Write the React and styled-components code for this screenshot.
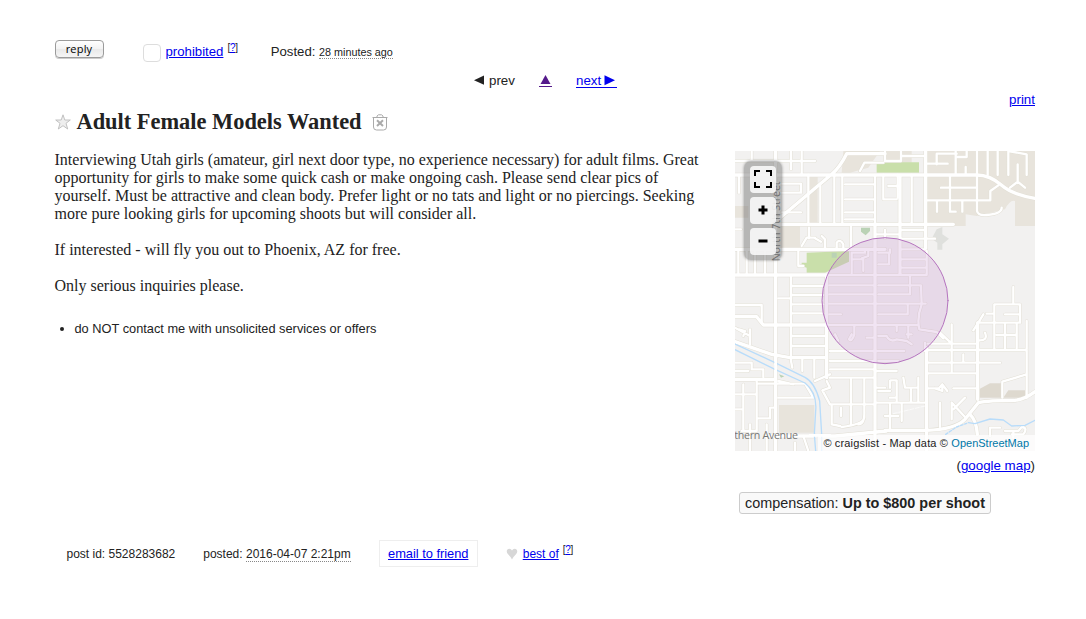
import React from 'react';
import styled, { createGlobalStyle } from 'styled-components';

const GlobalStyle = createGlobalStyle`
  * { box-sizing: border-box; }
  body { margin: 0; background: #fff; color: #222; font-family: "Liberation Sans", Arial, sans-serif; }
  a { color: #0000ee; text-decoration: underline; }
`;

const Page = styled.main`
  width: 1086px;
  height: 619px;
  padding: 39px 51px 0 54.5px;
  overflow: hidden;
`;
const Toolbar = styled.header`
  display: flex;
  align-items: center;
  height: 24px;
  font-size: 13.2px;
  white-space: nowrap;
`;
const ReplyButton = styled.button`
  width: 49px;
  height: 18px;
  margin: -5px 39px 0 0;
  padding: 0;
  border: 1px solid #9b9b9b;
  border-radius: 4px;
  background: linear-gradient(#fff, #f3f3f3 50%, #e9e9e9 51%, #f5f5f5);
  box-shadow: 0 1px 0 #ccc;
  color: #000;
  font: 11px/16px "Open Sans", sans-serif;
  letter-spacing: .2px;
`;
const FlagBox = styled.span`
  width: 18px;
  height: 18px;
  margin: 4px 5px 0 0;
  border: 1px solid #ddd;
  border-radius: 4px;
`;
const Help = styled.sup`
  align-self: flex-start;
  margin: ${p => p.$top}px 0 0 4px;
  font-size: 10px;
  line-height: 12px;
  letter-spacing: -0.3px;
`;
const PostedAgo = styled.span`
  margin-left: 33px;
`;
const Time = styled.time`
  font-size: ${p => p.$size}px;
  border-bottom: 1px dotted #888;
`;
const PrevNext = styled.nav`
  display: flex;
  align-items: center;
  height: 18px;
  margin: 8px 0 0 419.5px;
  font-size: 13.33px;
`;
const Arrow = styled.svg`
  width: 11px;
  height: 11px;
  fill: currentColor;
`;
const PrevItem = styled.span`
  display: flex;
  align-items: center;
  gap: 4px;
  width: 65px;
`;
const UpLink = styled.a`
  display: flex;
  width: 13px;
  height: 13px;
  margin: 1px 24px 0 0;
  padding: 0 1px;
  border-bottom: 1px solid #551a8b;
  && { color: #551a8b; text-decoration: none; }
`;
const NextLink = styled.a`
  display: flex;
  align-items: center;
  gap: 3px;
  width: 41px;
  height: 15px;
  margin-top: 1px;
  border-bottom: 1px solid #0000ee;
  && { text-decoration: none; }
`;
const PrintRow = styled.div`
  display: flex;
  justify-content: flex-end;
  height: 18px;
  font-size: 13.33px;
  line-height: 22px;
`;
const Title = styled.h2`
  display: flex;
  align-items: center;
  height: 26px;
  margin: 2px 0 16px;
  font: bold 22.4px/26px "Liberation Serif", "Times New Roman", serif;
  white-space: nowrap;
`;
const TitleText = styled.span`
  margin: 0 10px 0 6px;
`;
const Content = styled.section`
  display: flex;
  justify-content: space-between;
  height: 389px;
`;
const Body = styled.article`
  width: 655px;
  font: 16px/18px "Liberation Serif", "Times New Roman", serif;
`;
const Paragraph = styled.p`
  margin: 0 0 18px;
  white-space: nowrap;
`;
const Notices = styled.ul`
  margin: 25px 0 0;
  padding-left: 20px;
  font: 12.8px/18px "Liberation Sans", Arial, sans-serif;
`;
const Side = styled.aside`
  width: 300px;
`;
const MapBox = styled.div`
  position: relative;
  width: 300px;
  height: 300px;
  overflow: hidden;
  background: #f2f1f0;
`;
const MapArt = styled.svg`
  display: block;
  width: 300px;
  height: 300px;
`;
const MapControls = styled.div`
  position: absolute;
  left: 9px;
  top: 10px;
  width: 38px;
  height: 99px;
  padding: 5px 6px;
  display: flex;
  flex-direction: column;
  gap: 4px;
  border-radius: 7px;
  background: rgba(100, 100, 100, .42);
  box-shadow: 0 0 3px rgba(0,0,0,.4);
`;
const MapButton = styled.button`
  display: grid;
  place-items: center;
  width: 26px;
  height: 27px;
  padding: 0 0 1px;
  border: 0;
  border-radius: 4px;
  background: rgba(248,248,248,.9);
`;
const Attribution = styled.div`
  position: absolute;
  right: 0;
  bottom: 0;
  height: 16px;
  padding: 0 6px 0 5px;
  background: rgba(255,255,255,.72);
  font-size: 11px;
  line-height: 16px;
  letter-spacing: .16px;
  white-space: nowrap;
  a { color: #0078a8; text-decoration: none; letter-spacing: 0; }
`;
const MapLink = styled.p`
  margin: 5px 0 17px;
  font-size: 13.33px;
  line-height: 19px;
  text-align: right;
`;
const Attribute = styled.span`
  display: inline-flex;
  align-items: center;
  height: 22px;
  margin-left: 4px;
  padding: 0 5px;
  border: 1px solid #ccc;
  border-radius: 3px;
  background: #f9f9f9;
  font-size: 14.4px;
  white-space: pre;
`;
const PostInfo = styled.footer`
  display: flex;
  align-items: center;
  height: 27px;
  padding-left: 12px;
  font-size: 12px;
  white-space: nowrap;
`;
const PostedOn = styled.span`
  margin: 0 28px;
`;
const EmailBox = styled.span`
  width: 99px;
  height: 27px;
  margin-right: 28px;
  border: 1px solid #eee;
  font-size: 13px;
  letter-spacing: -.04px;
  line-height: 26px;
  text-align: center;
  a { font-size: 12.9px; }
`;
const BestOf = styled.a`
  margin-left: 5px;
`;

const streets = {
  main: `M0 295H450 M122 0V900 M420 220V900 M130 205L290 70Q315 48 335 8H450 M130 220H655 M275 375V680
    M0 72H725Q765 72 800 103Q830 130 900 142 M572 0V292 M495 72V370 M575 590V900 M0 685H120
    M90 855H300L455 840 M450 838H575Q660 835 690 805L730 755Q760 748 840 748Q870 745 900 722 M705 790Q725 810 727 850 M0 572L110 610L165 620H270
    M728 515V745 M0 372H275 M0 497H65L85 522H270`,
  side: `M0 30H240 M12 72V125 M50 0V30 M110 98H198V125H110 M140 184H198 M200 0V72 M168 0V55 M220 72V220 M256 105V220 M298 72V220 M322 72V220
    M330 100H415 M330 145H415 M330 184H415 M330 205H420 M420 72V220 M375 60L388 35H445 M445 72V145H485 M460 105H495 M488 72V140
    M190 295V345H205 M200 285L215 260H240 M222 230V262 M260 255L270 265V290 M240 262L258 272 M305 292V275Q315 262 325 280V292 M348 220V290
    M10 295V372 M35 295V372 M60 295V372 M90 295V372 M168 375V625 M130 442H165 M172 405H265 M172 432H265 M172 460H265 M172 487H265
    M172 555H270 M172 585H270 M0 462H80V515 M12 535L30 540L25 555 M45 535V580 M0 530L45 555 M172 650L168 630 M202 620V660 M238 620V680 M240 690L285 670
    M285 600H420 M285 630H420 M285 655H420 M285 680H420V710H450 M275 690L285 710L262 718L285 760H420 M290 765V820L315 825 M318 770V795
    M348 685V820 M388 685V800Q385 820 320 828 M370 820Q390 820 388 780 M0 635H50V655H85V678 M0 660H40 M65 690V840H20
    M25 700V790 M0 730H65 M25 760V840 M70 802H105V770H122 M70 698H210L235 740H130 M130 690L175 700 M45 820V900 M95 820V900 M180 875V900 M205 855L220 900
    M0 235H18 M450 0V30H498V0 M498 15H570 M605 40V8H665 M578 38H638 M662 0V70 M662 18H695V0 M726 0V180Q730 195 755 192Q800 188 800 170
    M758 72V0 M788 72V0 M820 72V0L875 10V72 M848 40V92L825 110 M848 92L870 110 M692 70V48 M645 75V182H662 M618 110H725 M575 148H766V120L790 103
    M606 148V182 M682 148V182 M530 72V220 M495 237H570 M495 263H600 M450 237V262 M420 250H490 M835 408V460
    M755 488H778V460H855V515H730L715 538 M730 515L745 490 M778 460V595 M810 515V590 M845 515V590 M785 552H845 M810 490H850 M875 510V595 M750 545Q760 570 730 568
    M578 578H720 M575 597H875V740 M575 635H795 M575 667H725 M575 712H612L622 700L637 720 M622 705V720L600 712 M655 712H725 M650 520V663
    M615 545L650 578 M685 610V633 M802 740V692L875 670 M420 660H485 M430 720H465 M465 740H485 M468 688H485V750 M465 690V710
    M505 680L510 710H550V680 M528 710V755 M550 710V755 M425 755H570 M465 755V835 M500 755V810 M450 795H490
    M615 755V828 M650 755V805 M650 755L690 798 M690 740L655 775 M765 855V830H795 M810 840H850L860 828Q880 830 865 850H830 M835 840V860 M0 775H25`,
  zone: `M283 403H415 M283 430H415 M283 458H530 M283 490H318 M275 522H548 M350 350V305H390V295 M350 325H385V360 M350 305V365 M275 372H575V300 M400 300V315L380 322
    M495 295H570 M495 325H570 M495 350H570 M430 305H462V340H430 M465 295V305 M430 403H558L560 460Q545 500 553 535L605 543L625 562 M525 375V430H430
    M430 458H572 M430 490H518V460 M430 555L455 555Q465 575 485 565L515 570L530 580 M520 525V560 M485 525V540 M515 550H530
    M358 525V550Q350 575 342 565L350 550 M395 560H420 M285 600H508 M300 550L310 570 M570 575V600 M430 630H490 M420 260V640`
};

function CityMap() {
  return (
    <MapArt viewBox="0 0 900 900" fill="none" strokeLinecap="round" strokeLinejoin="round">
      <path fill="#e8e4dc" d="M325 0H435L400 50L345 65H320Z M220 75H248V215H220Z M130 225H195V290H130Z M0 165H40V200H0Z M450 0H530V35H450Z M575 0H900V225H840V150Q825 145 810 175L725 195L692 190V225H575Z M132 762H238V845H132Z" />
      <path fill="#ded9cf" d="M732 715L765 697H800V740H732Z M820 718H873V740H805Z" />
      <path fill="#c9dfaa" d="M425 34H552V65H425Z M215 305L342 300V332L270 365H215V350L200 345V335L215 335Z" />
      <path fill="#bad2b5" d="M378 230H405V240L392 253L378 242Z M290 305H305V320H290Z M132 670L148 676L138 680Z" />
      <path fill="#dfe0dd" d="M605 235L622 228V250L642 263L622 280V296H607V275L590 263Z" />
      {['#e2dfd5', '#fff'].map((color, i) => (
        <g key={color} stroke={color}>
          <path d={streets.side} strokeWidth={i ? 7 : 10} />
          <path d={streets.zone} strokeWidth={i ? 7 : 10} />
          <path d={streets.main} strokeWidth={i ? 10 : 13} />
        </g>
      ))}
      <path stroke="#f2f1f0" strokeWidth="10" d="M0 588L120 647L210 687Q245 715 247 765L250 900" />
      <path stroke="#b8dcfa" strokeWidth="4" d="M0 579L120 635L210 679Q240 695 254 750L260 850V900 M0 596L120 655L210 696Q247 725 242 780L238 850L242 900" />
      <path stroke="#fff" strokeWidth="8" d="M122 610V665 M225 853H285" />
      <path stroke="#b8dcfa" strokeWidth="4" d="M700 815L720 818L765 804L805 807L830 825L870 823L900 808" />
      <path stroke="#b8dcfa" strokeWidth="4" strokeDasharray="8 5" d="M632 850L665 828L695 817" />
      <path stroke="#fff" strokeWidth="2" strokeDasharray="12 5" d="M475 788L570 765" />
      <circle cx="450" cy="449" r="189" fill="#c895d0" fillOpacity=".25" stroke="#b574bf" strokeWidth="3" />
      <text transform="translate(135 331) rotate(-90)" fill="#777" fontFamily="Open Sans, sans-serif" fontSize="32" textLength="240">North 7th Street</text>
      <text x="-2" y="863" fill="#777" fontFamily="Open Sans, sans-serif" fontSize="32" textLength="191">thern Avenue</text>
    </MapArt>
  );
}

export default function App() {
  return (
    <>
      <GlobalStyle />
      <Page>
        <Toolbar>
          <ReplyButton>reply</ReplyButton>
          <FlagBox />
          <a href="#prohibited">prohibited</a>
          <Help $top={3}>[<a href="#help">?</a>]</Help>
          <PostedAgo>Posted: <Time $size={10.8}>28 minutes ago</Time></PostedAgo>
        </Toolbar>
        <PrevNext>
          <PrevItem><Arrow viewBox="0 0 11 11"><path d="M0 5.2 10 .6V9.8Z" /></Arrow>prev</PrevItem>
          <UpLink href="#up"><Arrow viewBox="0 0 11 11"><path d="M5.5 1 10.5 10H.5Z" /></Arrow></UpLink>
          <NextLink href="#next">next<Arrow viewBox="0 0 11 11"><path d="M.5 .3 11 5.3.5 10.3Z" /></Arrow></NextLink>
        </PrevNext>
        <PrintRow><a href="#print">print</a></PrintRow>
        <Title>
          <svg width="16" height="16" viewBox="0 0 16 16"><path d="M8 .8 9.8 6H15.3L11 9.3 12.7 15 8 11.7 3.3 15 5 9.3.7 6H6.2Z" fill="#eee" stroke="#bbb" strokeWidth=".9" /></svg>
          <TitleText>Adult Female Models Wanted</TitleText>
          <svg width="16" height="17" viewBox="0 0 16 17" fill="none" stroke="#aaa"><path d="M.5 3.5H15.5M5 3V2L6.5.8H9.5L11 2V3M1.5 3.5V13Q1.5 16 4.5 16H11.5Q14.5 16 14.5 13V3.5" /><path d="M5 6.3 11 12M11 6.3 5 12" strokeWidth="2" /></svg>
        </Title>
        <Content>
          <Body>
            <Paragraph>
              Interviewing Utah girls (amateur, girl next door type, no experience necessary) for adult films. Great<br />
              opportunity for girls to make some quick cash or make ongoing cash. Please send clear pics of<br />
              yourself. Must be attractive and clean body. Prefer light or no tats and light or no piercings. Seeking<br />
              more pure looking girls for upcoming shoots but will consider all.
            </Paragraph>
            <Paragraph>If interested - will fly you out to Phoenix, AZ for free.</Paragraph>
            <Paragraph>Only serious inquiries please.</Paragraph>
            <Notices><li>do NOT contact me with unsolicited services or offers</li></Notices>
          </Body>
          <Side>
            <MapBox>
              <CityMap />
              <MapControls>
                <MapButton aria-label="Full screen"><svg width="18" height="18" fill="none" stroke="#000" strokeWidth="2"><path d="M1 6V1H6M12 1H17V6M17 12V17H12M6 17H1V12" /></svg></MapButton>
                <MapButton aria-label="Zoom in"><svg width="10" height="10" stroke="#000" strokeWidth="3"><path d="M.5 5H9.5M5 .5V9.5" /></svg></MapButton>
                <MapButton aria-label="Zoom out"><svg width="10" height="4"><path d="M.5 .5H9.5V3.5H.5Z" /></svg></MapButton>
              </MapControls>
              <Attribution>© craigslist - Map data © <a href="#osm">OpenStreetMap</a></Attribution>
            </MapBox>
            <MapLink>(<a href="#google">google map</a>)</MapLink>
            <Attribute>compensation: <b>Up to $800 per shoot</b></Attribute>
          </Side>
        </Content>
        <PostInfo>
          <span>post id: 5528283682</span>
          <PostedOn>posted: <Time $size={12}>2016-04-07 2:21pm</Time></PostedOn>
          <EmailBox><a href="#email">email to friend</a></EmailBox>
          <svg width="12" height="12" viewBox="0 0 12 12"><path d="M6 11.5Q5 9 2 6.2C-.4 3.6 1 .8 3.3.8Q5.2.8 6 2.6Q6.8.8 8.7.8C11 .8 12.4 3.6 10 6.2Q7 9 6 11.5Z" fill="#d7d7d7" /></svg>
          <BestOf href="#best">best of</BestOf>
          <Help $top={4}>[<a href="#help">?</a>]</Help>
        </PostInfo>
      </Page>
    </>
  );
}
